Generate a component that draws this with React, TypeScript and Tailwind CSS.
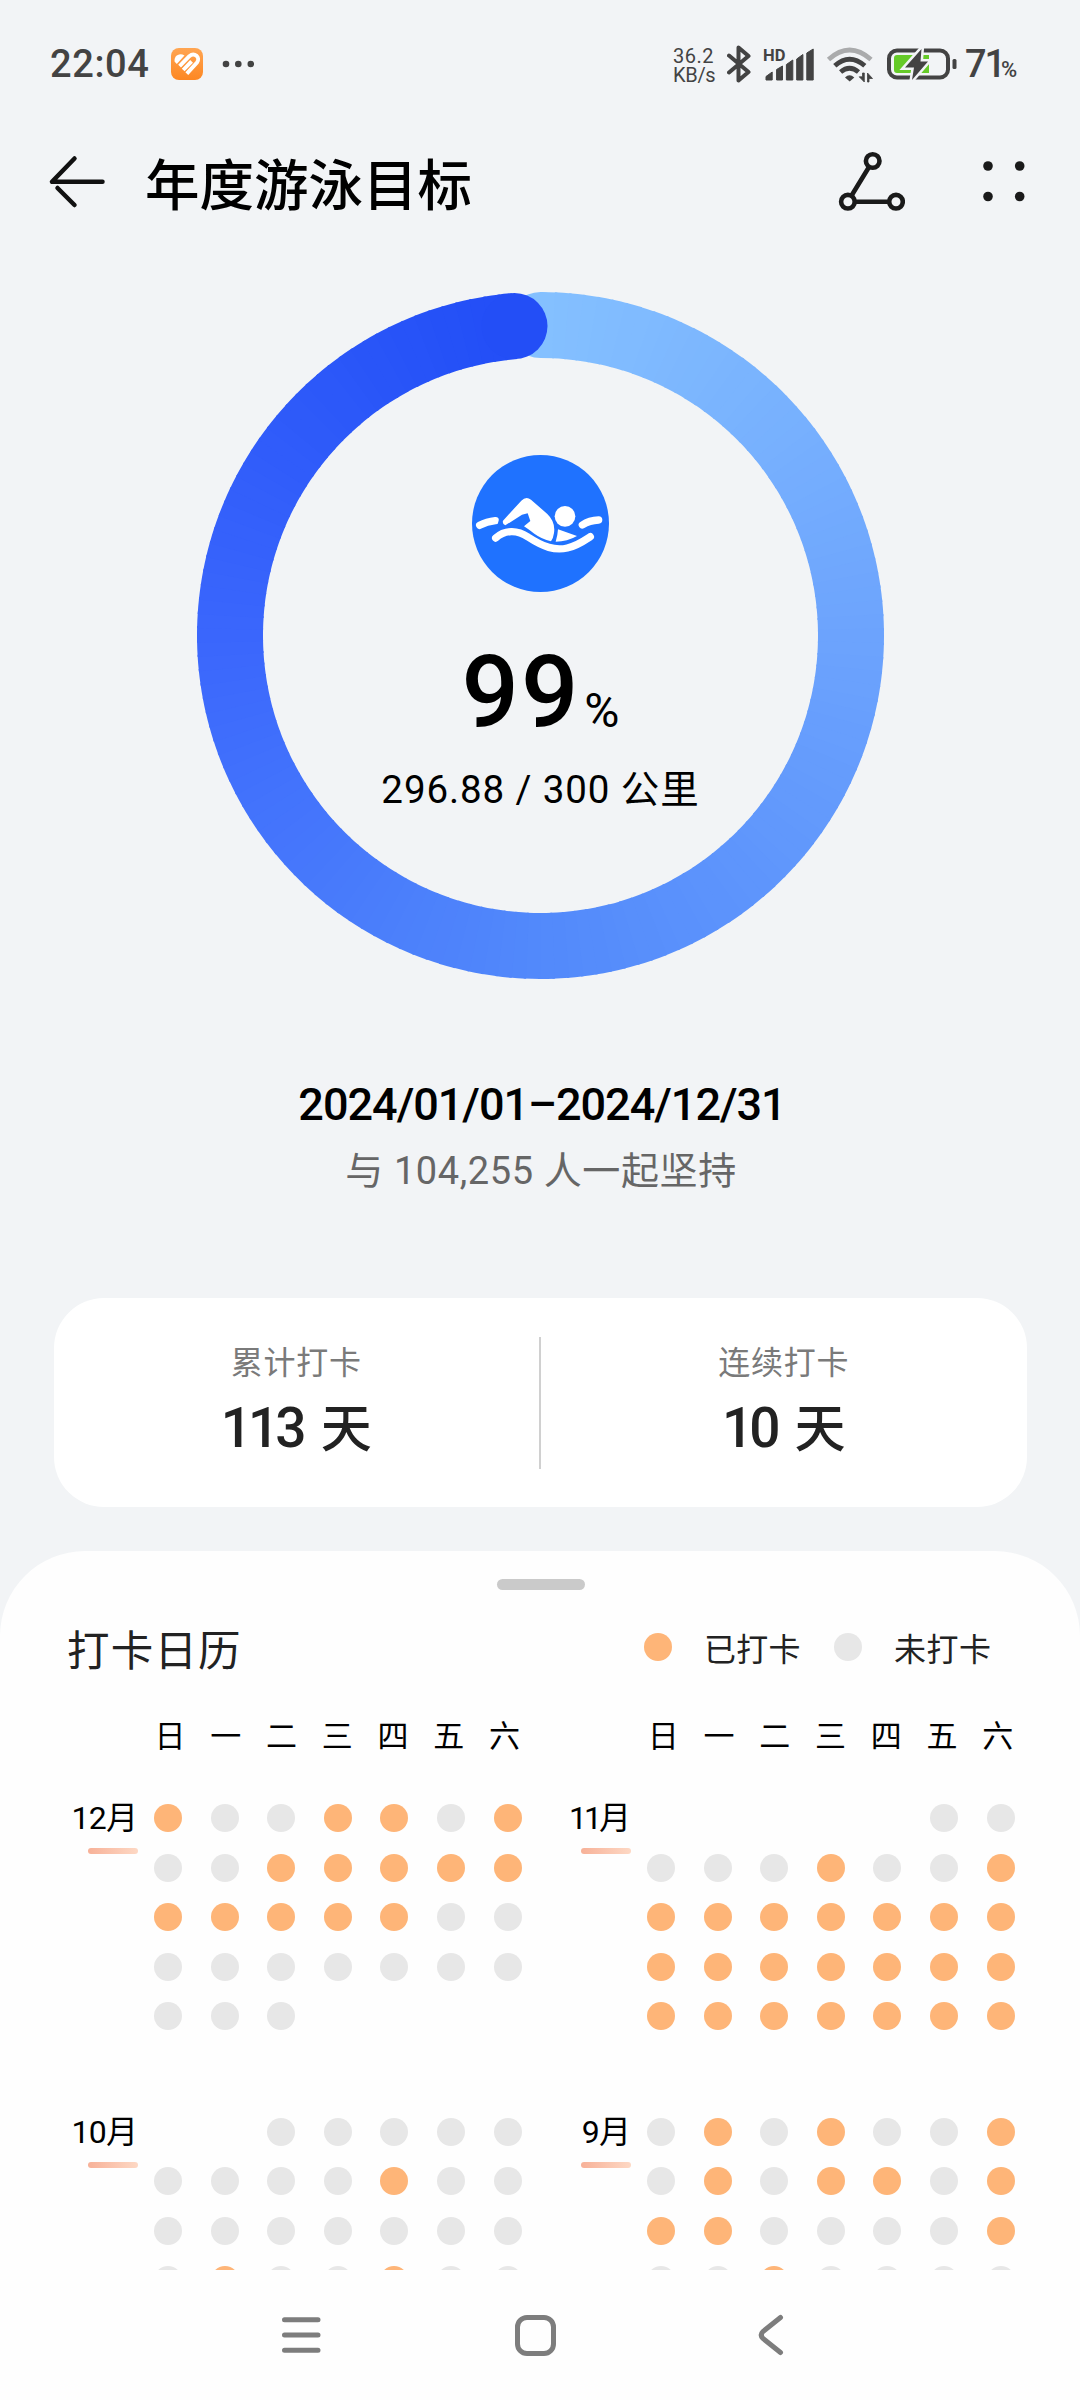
const weekdays = ["日", "一", "二", "三", "四", "五", "六"];

// x = checked in, o = missed, . = outside of the month
const leftMonths = [
  { month: 12, rows: ["xooxxox", "ooxxxxx", "xxxxxoo", "ooooooo", "ooo...."] },
  { month: 10, rows: ["..ooooo", "ooooxoo", "ooooooo", "oxooxoo", "ooooo.."] },
];

const rightMonths = [
  { month: 11, rows: [".....oo", "oooxoox", "xxxxxxx", "xxxxxxx", "xxxxxxx"] },
  { month: 9, rows: ["oxoxoox", "oxoxxox", "xxoooox", "ooxoooo", "ooooooo"] },
];

// Ring gradient stops: [degrees, r, g, b]
const ringStops = [
  [0, 132, 192, 255],
  [90, 108, 163, 253],
  [180, 82, 137, 251],
  [270, 58, 102, 252],
  [345, 36, 80, 247],
  [360, 35, 77, 246],
];

const ringColor = (deg: number) => {
  const i = Math.max(1, ringStops.findIndex((s) => s[0] >= deg));
  const a = ringStops[i - 1];
  const b = ringStops[i];
  const t = (deg - a[0]) / (b[0] - a[0]);
  const c = [1, 2, 3].map((k) => Math.round(a[k] + (b[k] - a[k]) * t));
  return `rgb(${c.join(",")})`;
};

const RADIUS = 310.5;
const END = 355.2;

const point = (deg: number) => {
  const rad = (deg * Math.PI) / 180;
  return [344.5 + RADIUS * Math.sin(rad), 343.5 - RADIUS * Math.cos(rad)];
};

function Ring() {
  const step = 2.4;
  const segments = Array.from({ length: Math.round(END / step) }, (_, i) => i * step);
  const [sx, sy] = point(0);
  const [ex, ey] = point(END);

  return (
    <svg viewBox="0 0 688 688" className="col-start-1 row-start-1 h-[688px] w-[688px]">
      <circle cx={sx} cy={sy} r="33" fill={ringColor(0)} />
      {segments.map((deg) => {
        const [x1, y1] = point(deg);
        const [x2, y2] = point(Math.min(deg + step + 0.4, END));
        return (
          <path
            key={deg}
            d={`M${x1} ${y1}A${RADIUS} ${RADIUS} 0 0 1 ${x2} ${y2}`}
            fill="none"
            stroke={ringColor(deg)}
            strokeWidth="66"
          />
        );
      })}
      <circle cx={ex} cy={ey} r="33" fill={ringColor(END)} />
    </svg>
  );
}

function SwimIcon() {
  return (
    <svg viewBox="96 76 411 411" className="h-[137px] w-[137px]">
      <circle cx="301.5" cy="281.5" r="205.5" fill="#1f72ff" />
      <g fill="none" stroke="#fff" strokeWidth="22" strokeLinecap="round">
        <path d="M119 287Q140 276 166 273" />
        <path d="M427 286Q448 272 476 271" />
        <path d="M167 325C195 300 232 300 264 322C310 352 345 364 382 355C412 348 430 335 451 321" />
      </g>
      <path d="M184 256L176 290" stroke="#1f72ff" strokeWidth="8" />
      <g fill="#fff">
        <circle cx="375" cy="260" r="31" />
        <path d="M189 273L244 213Q258 199 273 210L322 253Q347 277 342 310Q340 325 333 335Q305 328 283 312Q267 300 252 290L271 274L263 251L246 255L196 287Q186 283 189 273Z" />
        <path d="M354 299L411 319Q382 336 347 336Q353 318 354 299Z" />
      </g>
    </svg>
  );
}

function StatusBar() {
  return (
    <div className="flex h-[128px] shrink-0 items-center pl-[50px] text-[#434343]">
      <span className="w-[121px] text-[38px] font-medium leading-[40px] tracking-[0.6px]">22:04</span>
      <svg viewBox="0 0 32 32" className="h-8 w-8">
        <defs>
          <linearGradient id="logo" x1="0" y1="0" x2="0" y2="1">
            <stop offset="0" stopColor="#ffa552" />
            <stop offset="1" stopColor="#fd8722" />
          </linearGradient>
        </defs>
        <rect width="32" height="32" rx="8" fill="url(#logo)" />
        <path d="M3.7 13.8C2.4 8.5 8 3.8 13.5 7.4L5.8 16Z" fill="#fff" />
        <path
          d="M8.6 18.2L18.3 8.2C23.5 3.8 29.8 9.5 26 14.5L15.8 25.6M12.2 22L20.6 13.3"
          fill="none"
          stroke="#fff"
          strokeWidth="3.9"
        />
      </svg>
      <svg viewBox="0 0 32 8" className="ml-[19px] h-2 w-8" fill="currentColor">
        <circle cx="4" cy="4" r="3.3" />
        <circle cx="16.3" cy="4" r="3.3" />
        <circle cx="28.8" cy="4" r="3.3" />
      </svg>
      <div className="ml-[419px] mt-[3px] w-[54px] text-[20px] leading-[19px]">
        <div className="tracking-[0.5px]">36.2</div>
        <div className="tracking-[-0.3px]">KB/s</div>
      </div>
      <svg
        viewBox="0 0 24 40"
        className="h-10 w-6"
        fill="none"
        stroke="currentColor"
        strokeWidth="4"
        strokeLinecap="round"
        strokeLinejoin="round"
      >
        <path d="M2 11.5L21.5 28L11.5 36.5V3.5L21.5 12L2 28.5" />
      </svg>
      <svg viewBox="0 0 52 40" className="ml-3 h-10 w-[52px]" fill="currentColor">
        <text x="0" y="16.5" fontSize="16.5" fontWeight="700">
          HD
        </text>
        <path
          d="M3 36V32.5L9.2 28V36Z M13.6 36V25.5L19.5 22V36Z M23.4 36V20.5L29.8 16V36Z M33.7 36V15L39.9 10.5V36Z M43.8 36V9L50.2 5V36Z"
          stroke="currentColor"
          strokeWidth="1"
          strokeLinejoin="round"
        />
      </svg>
      <svg viewBox="0 0 48 40" className="ml-[11px] h-10 w-12" fill="none" stroke="currentColor" strokeWidth="4.8">
        <path d="M2.5 15.5Q23.5 -3.5 45 15.5" stroke="#aaabac" />
        <path d="M8.8 21.8Q23.5 8.5 38.8 21.8" />
        <path d="M14.6 28Q23.5 20.5 32.5 28" />
        <path d="M19 33.5Q23.5 29 28.3 33.5L23.7 37.4Z" fill="currentColor" stroke="none" />
        <path
          d="M38.3 29V38L33.2 32.8H36.5V29Z M41.5 38V29L46.5 34.5H43V38Z"
          fill="currentColor"
          stroke="currentColor"
          strokeWidth="0.8"
        />
      </svg>
      <svg viewBox="0 0 70 40" className="ml-[13px] h-10 w-[70px]">
        <rect x="2" y="6.6" width="59" height="26.8" rx="8" fill="none" stroke="#434343" strokeWidth="4" />
        <path d="M10 11H42V29H10Q7 29 7 26V14Q7 11 10 11Z" fill="#65ca28" />
        <rect x="65.5" y="15" width="4" height="10" rx="1.5" fill="#434343" />
        <path
          d="M34.5 5L18 23.5H27L25 36L41 17.5H33.5Z"
          fill="#434343"
          stroke="#f2f4f6"
          strokeWidth="5"
          paintOrder="stroke"
        />
      </svg>
      <span className="ml-2 mt-[6px] flex items-baseline leading-[40px]">
        <span className="w-[36px] text-[38px] font-medium tracking-[-2px]">71</span>
        <span className="text-[22px] font-medium">%</span>
      </span>
    </div>
  );
}

function TitleBar() {
  return (
    <header className="flex h-[108px] shrink-0 items-center pl-12">
      <svg
        viewBox="0 0 58 54"
        className="h-[54px] w-[58px]"
        fill="none"
        stroke="#111"
        strokeWidth="4.5"
        strokeLinecap="round"
      >
        <path d="M26.5 3.5L4 26.8H54.5" strokeLinejoin="round" />
        <path d="M9.5 33L26.5 50" />
      </svg>
      <h1 className="ml-[39px] mt-[7px] w-[692px] text-[54.5px] font-medium leading-[64px] text-black">
        年度游泳目标
      </h1>
      <svg viewBox="0 0 68 64" className="h-16 w-[68px]" fill="none" stroke="#1a1a1a" strokeWidth="4.6">
        <circle cx="35.7" cy="11" r="6.8" />
        <circle cx="10.9" cy="51.7" r="6.8" />
        <circle cx="59" cy="51.7" r="6.8" />
        <path d="M32 17L14.6 45.5M18 51.7H52" />
      </svg>
      <svg viewBox="0 0 42 42" className="ml-[78px] h-[42px] w-[42px]" fill="#1a1a1a">
        <circle cx="5" cy="5" r="4.8" />
        <circle cx="36.7" cy="5" r="4.8" />
        <circle cx="5" cy="35.5" r="4.8" />
        <circle cx="36.7" cy="35.5" r="4.8" />
      </svg>
    </header>
  );
}

function Progress() {
  return (
    <div className="mt-14 grid w-[688px] shrink-0 self-center text-black">
      <Ring />
      <div className="col-start-1 row-start-1 flex flex-col items-center pt-[163px]">
        <SwimIcon />
        <div className="mt-[50px] flex h-[101px] items-baseline pl-px leading-[101px]">
          <span className="text-[101px] font-medium tracking-[2px]">99</span>
          <span className="ml-1 mt-[2px] text-[48px] leading-[48px]">%</span>
        </div>
        <p className="mt-[23px] pl-px text-[38.5px] leading-[48px] tracking-[0.9px]">296.88 / 300 公里</p>
      </div>
    </div>
  );
}

const Stat = ({ title, value }: { title: string; value: string }) => (
  <div className="flex-1 pt-[45px] text-center">
    <p className="text-[32px] leading-[40px] tracking-[0.8px] text-[#7a7a7a]">{title}</p>
    <p className="mt-[15px] text-[55px] font-medium leading-[60px] text-[#222]">
      <span className="tracking-[-4px]">{value}</span>
      <span className="ml-[18px] text-[51px]">天</span>
    </p>
  </div>
);

const Weekdays = () => (
  <div className="flex">
    {weekdays.map((day) => (
      <span key={day} className="w-[55.75px] text-center text-[31px] leading-[40px] text-black">
        {day}
      </span>
    ))}
  </div>
);

const Month = ({ month, rows }: { month: number; rows: string[] }) => (
  <div className="flex">
    <div className="flex w-[112px] shrink-0 flex-col items-end">
      <span className="mt-[-2px] text-[32px] leading-[32px] text-black">
        <span className={month === 11 ? "tracking-[-3px]" : "tracking-[-0.7px]"}>{month}</span>月
      </span>
      <span className="mt-[14px] h-[6px] w-[50px] rounded-full bg-linear-to-r from-[#f7b198] to-[#fdd8c4]" />
    </div>
    <div className="ml-4 grid shrink-0 grid-cols-[repeat(7,28px)] gap-x-[28.6px] gap-y-[21.5px]">
      {rows
        .join("")
        .split("")
        .map((day, index) => (
          <span
            key={index}
            className={
              day === "x"
                ? "h-7 w-7 rounded-full bg-[#feb578]"
                : day === "o"
                  ? "h-7 w-7 rounded-full bg-[#e7e7e7]"
                  : "h-7 w-7"
            }
          />
        ))}
    </div>
  </div>
);

function CalendarSheet() {
  return (
    <section className="mt-[44px] flex h-[719px] shrink-0 flex-col overflow-hidden rounded-t-[85px] bg-[#fefefe] pt-7">
      <div className="ml-[497px] h-[11px] w-[88px] shrink-0 rounded-full bg-[#cacaca]" />
      <div className="mt-9 flex h-[52px] shrink-0 items-center pl-[67px] text-[#222]">
        <h2 className="w-[577px] text-[42.5px] leading-[52px] tracking-[1.2px]">打卡日历</h2>
        <span className="mb-[10px] h-7 w-7 rounded-full bg-[#feb578]" />
        <span className="-mt-1 ml-[32px] text-[32px] leading-[40px] tracking-[0.3px]">已打卡</span>
        <span className="mb-[10px] ml-[33px] h-7 w-7 rounded-full bg-[#e7e7e7]" />
        <span className="-mt-1 ml-[32px] text-[32px] leading-[40px] tracking-[0.5px]">未打卡</span>
      </div>
      <div className="mt-[39px] flex shrink-0">
        <div className="ml-[142px]">
          <Weekdays />
        </div>
        <div className="ml-[103px]">
          <Weekdays />
        </div>
      </div>
      <div className="mt-[47px] flex shrink-0 pl-[26px]">
        <div className="flex w-[493px] flex-col gap-[87.5px]">
          {leftMonths.map((item) => (
            <Month key={item.month} {...item} />
          ))}
        </div>
        <div className="flex flex-col gap-[87.5px]">
          {rightMonths.map((item) => (
            <Month key={item.month} {...item} />
          ))}
        </div>
      </div>
    </section>
  );
}

function NavBar() {
  return (
    <nav className="flex h-[130px] shrink-0 items-center bg-[#fefefe] pl-[282px] text-[#7d7d7d]">
      <svg
        viewBox="0 0 39 36"
        className="h-9 w-[39px]"
        fill="none"
        stroke="currentColor"
        strokeWidth="5"
        strokeLinecap="round"
      >
        <path d="M2.5 2.7H36M2.5 18H36M2.5 33.3H36" />
      </svg>
      <div className="ml-[194px] h-[41px] w-[41px] rounded-[12px] border-[5px] border-[#7d7d7d]" />
      <svg
        viewBox="0 0 26 42"
        className="ml-[202px] h-[42px] w-[26px]"
        fill="none"
        stroke="currentColor"
        strokeWidth="5"
        strokeLinecap="round"
      >
        <path d="M22.5 3.5L5 17.5Q1.5 21 5 24.5L22.5 38.5" />
      </svg>
    </nav>
  );
}

function App() {
  return (
    <div className="flex h-[2400px] w-[1080px] flex-col overflow-hidden bg-[#f2f4f6] font-[Roboto,'Noto_Sans_CJK_SC',sans-serif]">
      <StatusBar />
      <TitleBar />
      <Progress />
      <p className="mt-[97px] pl-[4px] text-center text-[45px] font-medium leading-[56px] tracking-[-1px] text-black">
        2024/01/01–2024/12/31
      </p>
      <p className="mt-[14px] pl-[2px] text-center text-[38px] leading-[48px] tracking-[0.6px] text-[#666]">
        与 104,255 人一起坚持
      </p>
      <div className="mx-[53.5px] mt-[103px] flex h-[209px] shrink-0 rounded-[50px] bg-white">
        <Stat title="累计打卡" value="113" />
        <div className="mt-[39px] h-[132px] w-[2px] bg-[#d0d0d0]" />
        <Stat title="连续打卡" value="10" />
      </div>
      <CalendarSheet />
      <NavBar />
    </div>
  );
}

export default App;
